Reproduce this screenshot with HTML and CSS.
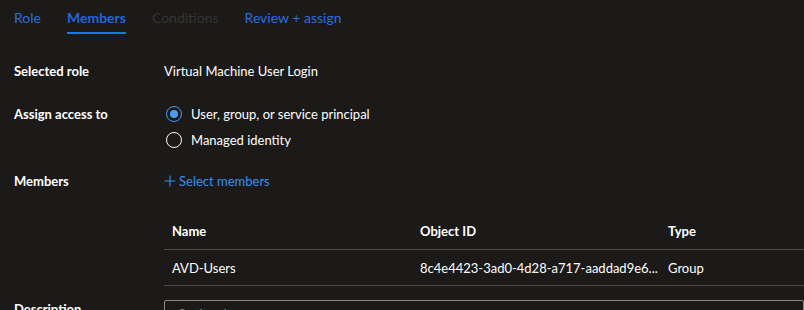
FILE: index.html
```html
<!DOCTYPE html>
<html>
<head>
<meta charset="utf-8">
<link rel="stylesheet" href="styles.css">
</head>
<body>
<div class="page">
  <nav class="tabs">
    <span class="tab">Role</span>
    <span class="tab active">Members</span>
    <span class="tab disabled">Conditions</span>
    <span class="tab">Review + assign</span>
  </nav>
  <div class="form">
    <div class="row r-role">
      <div class="label">Selected role</div>
      <div class="value">Virtual Machine User Login</div>
    </div>
    <div class="row r-access">
      <div class="label">Assign access to</div>
      <div class="radios">
        <div class="radio"><span class="dot checked"></span>User, group, or service principal</div>
        <div class="radio"><span class="dot"></span>Managed identity</div>
      </div>
    </div>
    <div class="row r-members">
      <div class="label">Members</div>
      <div class="value link"><svg class="plus" width="12" height="12" viewBox="0 0 12 12"><path d="M6 0.5V11.5M0.5 6H11.5" stroke="currentColor" stroke-width="1.1" fill="none"/></svg>Select members</div>
    </div>
    <div class="table-wrap">
      <div class="table">
        <div class="trow thead">
          <div class="c1">Name</div>
          <div class="c2">Object ID</div>
          <div class="c3">Type</div>
        </div>
        <div class="trow">
          <div class="c1">AVD-Users</div>
          <div class="c2">8c4e4423-3ad0-4d28-a717-aaddad9e6...</div>
          <div class="c3">Group</div>
        </div>
      </div>
    </div>
    <div class="row r-desc">
      <div class="label">Description</div>
      <div class="input"><span>Optional</span></div>
    </div>
  </div>
</div>
</body>
</html>
```
FILE: styles.css
```css
html, body {
  margin: 0;
  padding: 0;
  background: #1b1a19;
  overflow: hidden;
}
body {
  width: 804px;
  height: 310px;
  font-family: "Lato", "Open Sans", sans-serif;
  font-size: 13px;
  color: #ffffff;
}
.page {
  padding: 0 0 0 14px;
}
.tabs {
  display: flex;
  gap: 26px;
  height: 35px;
  align-items: flex-start;
}
.tab {
  font-size: 14px;
  color: #2a6fdc;
  padding-top: 9px;
  height: 23px;
  border-bottom: 2px solid transparent;
}
.tab.active {
  font-weight: 700;
  color: #2266d8;
  border-bottom-color: #1a7ae0;
}
.tab.disabled {
  color: #353433;
}
.form {
  padding-top: 27px;
}
.row {
  display: flex;
  align-items: flex-start;
}
.label {
  width: 150px;
  font-weight: 700;
  line-height: 18px;
}
.value {
  line-height: 18px;
}
.r-access {
  margin-top: 25px;
}
.radios {
  display: flex;
  flex-direction: column;
  gap: 8px;
}
.radio {
  display: flex;
  align-items: center;
  gap: 9px;
  line-height: 18px;
  margin-left: 2px;
}
.dot {
  width: 16px;
  height: 16px;
  box-sizing: border-box;
  border: 1px solid #ffffff;
  border-radius: 50%;
  position: relative;
  display: inline-block;
}
.dot.checked {
  border-color: #479ef5;
}
.dot.checked::after {
  content: "";
  position: absolute;
  left: 3px;
  top: 3px;
  width: 8px;
  height: 8px;
  border-radius: 50%;
  background: #479ef5;
}
.r-members {
  margin-top: 23px;
}
.link {
  color: #3a8ef0;
  display: flex;
  align-items: center;
  gap: 3px;
}
.plus {
  color: #3a8ef0;
}
.table-wrap {
  padding-left: 150px;
  margin-top: 23px;
}
.table {
  width: 640px;
}
.trow {
  display: flex;
  height: 35px;
  align-items: center;
  border-bottom: 1px solid #4a4948;
}
.thead {
  font-weight: 700;
  height: 36px;
}
.c1 {
  width: 248px;
  padding-left: 8px;
}
.c2 {
  width: 248px;
}
.c3 {
  flex: 1;
}
.r-desc {
  margin-top: 14px;
}
.input {
  flex: 1;
  height: 30px;
  border: 1px solid #8a8886;
  border-radius: 2px;
  color: #8a8886;
  padding: 5px 12px;
}
```
